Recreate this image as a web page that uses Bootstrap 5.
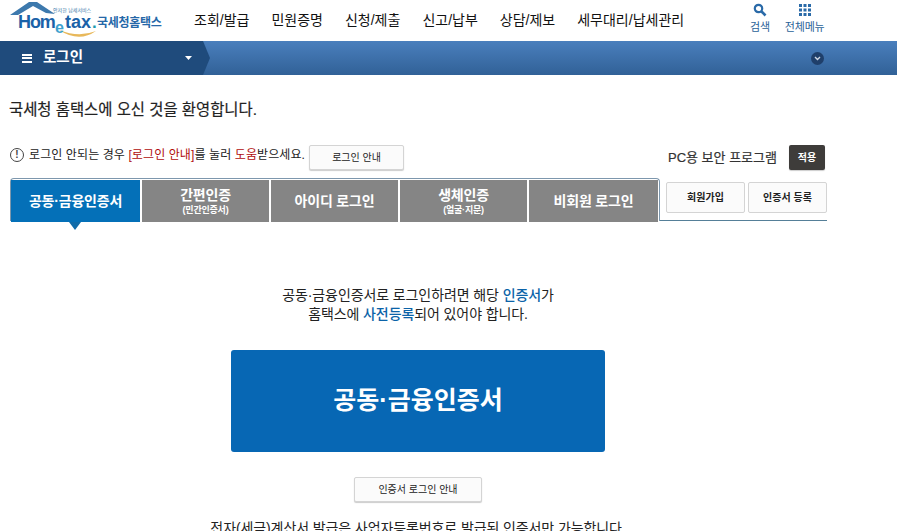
<!DOCTYPE html>
<html lang="ko"><head><meta charset="utf-8">
<link href="https://cdn.jsdelivr.net/npm/bootstrap@5.3.0/dist/css/bootstrap.min.css" rel="stylesheet">
<style>
html,body{height:531px;overflow:hidden}
body{font-family:"Liberation Sans","Noto Sans CJK KR",sans-serif;color:#222;background:#fff}
.topbar{height:41px;padding-left:9px}
.logo{width:156px;height:41px;flex:none}
.logo text{font-family:"Liberation Sans","Noto Sans CJK KR",sans-serif}
.mainmenu{margin-left:29px;gap:22px;font-size:14px;color:#111;height:41px;white-space:nowrap}
.toolset{position:absolute;top:1px;left:750px;gap:15px;color:#2a6298;font-size:11px;letter-spacing:-.2px}
.toolset>div{line-height:14px}
.toolset svg{display:block;margin:2px auto 3px}
.locbar{height:34px;background:linear-gradient(#4a7fbd,#316197)}
.locbox{width:210px;height:34px;background:#1f4b7c;color:#fff;font-size:14.5px;font-weight:700;clip-path:polygon(0 0,203px 0,210px 50%,203px 100%,0 100%);padding:0 18px 0 22px}
.menubars{width:10px;height:9px;border-top:2px solid #fff;border-bottom:2px solid #fff;margin-right:11px;position:relative}
.menubars::after{content:"";position:absolute;left:0;right:0;top:1.5px;height:2px;background:#fff}
.downdot{width:13px;height:13px;border-radius:50%;background:#1f3f6a;margin-right:73px}
.welcome{font-size:15.4px;font-weight:400;margin:25px 0 0 9px;line-height:20px;-webkit-text-stroke:.2px #222}
.helpline{margin:25px 72px 0 10px;height:25px;font-size:12px;letter-spacing:.1px;color:#222}
.helpline b{font-weight:400;color:#b00d0d}
.helpnote{margin-bottom:6px}
.helpicon{width:14px;height:14px;border:1.5px solid #444;border-radius:50%;font-size:10px;line-height:11px;text-align:center;color:#444;font-weight:700;margin-right:5px;letter-spacing:0}
.plainbtn{background:#fbfbfb;border:1px solid #d4d4d4;border-radius:2px;box-shadow:0 1px 1px #ccc;font-size:10px;color:#222;padding:0;display:flex;align-items:center;justify-content:center;letter-spacing:0}
.guidebtn{width:95px;height:25px;margin-left:4px}
.seclabel{font-size:13px;font-weight:400;-webkit-text-stroke:.2px #333;color:#333;margin-right:12px;letter-spacing:0}
.applybtn{width:36px;height:25px;background:#3e3c3a;color:#fff;font-size:10px;font-weight:700;border-radius:2px}
.tabrow{margin:8px 71px 0 10px;height:43px}
.tabgroup{width:650px;height:43px;border:1px solid #7d97ad;border-bottom:0;border-radius:4px 4px 0 0;padding:1px 1px 0 0;gap:2px;flex:none}
.tabitem{background:#858585;color:#fff;width:127px;height:42px;font-size:14px;font-weight:700;line-height:17px;text-align:center;letter-spacing:-.2px}
.tabitem small{font-size:9px;line-height:12px;display:block;font-weight:700}
.tabitem.sel{background:#0470b8;width:129px;position:relative}
.tabitem.sel::after{content:"";position:absolute;top:100%;left:58px;border:6px solid transparent;border-top:8px solid #0f6ba9;border-bottom:0}
.tabitem.last{flex:1}
.sidegroup{flex:1;border-bottom:1px solid #557f98;padding-left:6px;gap:3px;height:43px}
.sidegroup .plainbtn{height:31px;width:79px;box-shadow:none;font-weight:700;margin-top:4px;font-size:10px}
.centerpane{width:836px}
.notice{font-size:14px;line-height:19px;margin-top:65px;color:#222;letter-spacing:-.1px}
.notice b{color:#0b63a8;font-weight:500}
.bigbtn{width:374px;height:102px;background:#0767b4;color:#fff;font-size:25px;font-weight:700;border-radius:3px;margin:26px auto 0}
.certbtn{width:128px;height:25px;margin:25px auto 0}
.cutoff{font-size:14px;margin-top:17px;line-height:18px;color:#222;letter-spacing:-.1px;white-space:nowrap}
</style></head><body>
<div class="topbar d-flex align-items-center position-relative">
  <svg class="logo" viewBox="0 0 156 41"><path d="M1 15 L20 2 L28 2 L46 14 L37 13 L24 6 L9 15Z" fill="#3d79ad"/><path d="M50 30 Q70 38 87 31 Q70 43 50 30Z" fill="#e8b85a"/><text x="9" y="28" font-size="18" font-weight="700" fill="#1b62a8" letter-spacing="-1.1">Hom</text><text x="46" y="33" font-size="16" font-weight="700" fill="#3fa2cf">e</text><text x="56" y="28" font-size="18" font-weight="700" fill="#1b62a8">tax</text><text x="83" y="28" font-size="17" font-weight="700" fill="#1b9ab0">.</text><text x="44" y="12" font-size="5" fill="#3a78a8">안저한 납세서비스</text><text x="88" y="27" font-size="12" font-weight="700" fill="#2668a8" letter-spacing="-.3">국세청홈택스</text></svg>
  <nav class="mainmenu d-flex align-items-center"><span>조회/발급</span><span>민원증명</span><span>신청/제출</span><span>신고/납부</span><span>상담/제보</span><span>세무대리/납세관리</span></nav>
  <div class="toolset d-flex text-center">
    <div><svg width="14" height="14" viewBox="0 0 14 14"><circle cx="5.5" cy="5.5" r="3.7" fill="none" stroke="#2a6aa8" stroke-width="2.2"/><path d="M8.5 8.5 L12.5 12.5" stroke="#2a6aa8" stroke-width="2.6"/></svg>검색</div>
    <div><svg width="12" height="14" viewBox="0 0 12 12" fill="#2a6aa8"><rect x="0" y="0" width="3" height="3"/><rect x="4.5" y="0" width="3" height="3"/><rect x="9" y="0" width="3" height="3"/><rect x="0" y="4.5" width="3" height="3"/><rect x="4.5" y="4.5" width="3" height="3"/><rect x="9" y="4.5" width="3" height="3"/><rect x="0" y="9" width="3" height="3"/><rect x="4.5" y="9" width="3" height="3"/><rect x="9" y="9" width="3" height="3"/></svg>전체메뉴</div>
  </div>
</div>
<div class="locbar d-flex align-items-center justify-content-between">
  <div class="locbox d-flex align-items-center"><span class="menubars"></span><span class="flex-grow-1">로그인</span><svg width="7" height="4" viewBox="0 0 7 4"><path d="M0 0H7L3.5 4Z" fill="#fff"/></svg></div>
  <div class="downdot d-flex align-items-center justify-content-center"><svg width="7" height="5" viewBox="0 0 7 5"><path d="M1 1L3.5 3.5L6 1" fill="none" stroke="#cfd8e4" stroke-width="1.4"/></svg></div>
</div>
<h1 class="welcome">국세청 홈택스에 오신 것을 환영합니다.</h1>
<div class="helpline d-flex align-items-center">
  <span class="helpicon helpnote">!</span><span class="helpnote">로그인 안되는 경우 <b>[로그인 안내]</b>를 눌러 <b>도움</b>받으세요.</span>
  <button class="plainbtn guidebtn">로그인 안내</button>
  <span class="seclabel ms-auto">PC용 보안 프로그램</span>
  <button class="plainbtn applybtn border-0">적용</button>
</div>
<div class="tabrow d-flex">
  <div class="tabgroup d-flex">
    <div class="tabitem sel d-flex align-items-center justify-content-center">공동·금융인증서</div>
    <div class="tabitem d-flex flex-column align-items-center justify-content-center">간편인증<small>(민간인증서)</small></div>
    <div class="tabitem d-flex align-items-center justify-content-center">아이디 로그인</div>
    <div class="tabitem d-flex flex-column align-items-center justify-content-center">생체인증<small>(얼굴·지문)</small></div>
    <div class="tabitem last d-flex align-items-center justify-content-center">비회원 로그인</div>
  </div>
  <div class="sidegroup d-flex"><button class="plainbtn">회원가입</button><button class="plainbtn">인증서 등록</button></div>
</div>
<div class="centerpane text-center">
  <div class="notice">공동·금융인증서로 로그인하려면 해당 <b>인증서</b>가<br>홈택스에 <b>사전등록</b>되어 있어야 합니다.</div>
  <div class="bigbtn d-flex align-items-center justify-content-center">공동·금융인증서</div>
  <button class="plainbtn certbtn">인증서 로그인 안내</button>
  <div class="cutoff">전자(세금)계산서 발급은 사업자등록번호로 발급된 인증서만 가능합니다.</div>
</div>
<script src="https://cdn.jsdelivr.net/npm/bootstrap@5.3.0/dist/js/bootstrap.bundle.min.js"></script>
</body></html>
